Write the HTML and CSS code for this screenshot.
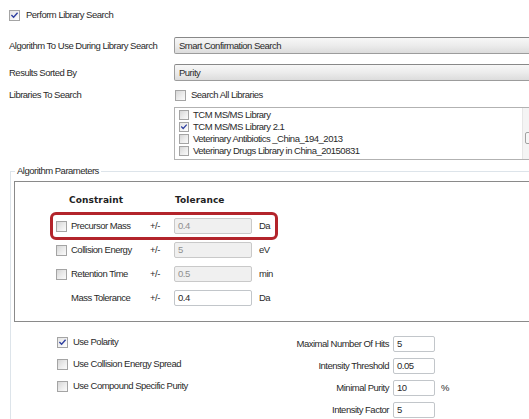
FILE: index.html
```html
<!DOCTYPE html>
<html>
<head>
<meta charset="utf-8">
<title>Library Search Settings</title>
<link rel="stylesheet" href="styles.css">
</head>
<body>
<div class="page">
  <label class="check-line top-check"><span class="cb on"><svg viewBox="0 0 11 11"><path d="M2.3 5.4 L4.4 7.6 L8.7 2.8"/></svg></span>Perform Library Search</label>

  <div class="field field-algo">
    <span class="field-label">Algorithm To Use During Library Search</span>
    <div class="combo">Smart Confirmation Search</div>
  </div>
  <div class="field field-sort">
    <span class="field-label">Results Sorted By</span>
    <div class="combo">Purity</div>
  </div>
  <div class="field field-libs">
    <span class="field-label">Libraries To Search</span>
    <label class="check-line all-libs"><span class="cb"></span>Search All Libraries</label>
  </div>

  <div class="lib-list">
    <ul class="lib-items">
      <li><span class="cb sm"></span>TCM MS/MS Library</li>
      <li><span class="cb sm on"><svg viewBox="0 0 11 11"><path d="M2.3 5.4 L4.4 7.6 L8.7 2.8"/></svg></span>TCM MS/MS Library 2.1</li>
      <li><span class="cb sm"></span>Veterinary Antibiotics _China_194_2013</li>
      <li><span class="cb sm"></span>Veterinary Drugs Library in China_20150831</li>
    </ul>
    <div class="vscroll">
      <span class="arrow up"></span>
      <span class="thumb"></span>
      <span class="arrow down"></span>
    </div>
  </div>

  <section class="group">
    <div class="legend">Algorithm Parameters</div>

    <div class="constraints">
      <div class="c-row c-head">
        <span class="h-constraint">Constraint</span>
        <span class="h-tol">Tolerance</span>
      </div>
      <div class="c-row flagged">
        <span class="cb"></span>
        <span class="c-label">Precursor Mass</span>
        <span class="pm">+/-</span>
        <span class="tbox off">0.4</span>
        <span class="unit">Da</span>
      </div>
      <div class="c-row">
        <span class="cb"></span>
        <span class="c-label">Collision Energy</span>
        <span class="pm">+/-</span>
        <span class="tbox off">5</span>
        <span class="unit">eV</span>
      </div>
      <div class="c-row">
        <span class="cb"></span>
        <span class="c-label">Retention Time</span>
        <span class="pm">+/-</span>
        <span class="tbox off">0.5</span>
        <span class="unit">min</span>
      </div>
      <div class="c-row">
        <span></span>
        <span class="c-label">Mass Tolerance</span>
        <span class="pm">+/-</span>
        <span class="tbox">0.4</span>
        <span class="unit">Da</span>
      </div>
    </div>

    <div class="extras">
      <div class="opts">
        <label class="check-line opt"><span class="cb on"><svg viewBox="0 0 11 11"><path d="M2.3 5.4 L4.4 7.6 L8.7 2.8"/></svg></span>Use Polarity</label>
        <label class="check-line opt"><span class="cb"></span>Use Collision Energy Spread</label>
        <label class="check-line opt"><span class="cb"></span>Use Compound Specific Purity</label>
      </div>
      <div class="limits">
        <span class="l-label">Maximal Number Of Hits</span><span class="tbox">5</span><span></span>
        <span class="l-label">Intensity Threshold</span><span class="tbox">0.05</span><span></span>
        <span class="l-label">Minimal Purity</span><span class="tbox">10</span><span class="unit">%</span>
        <span class="l-label">Intensity Factor</span><span class="tbox">5</span><span></span>
      </div>
    </div>
  </section>
</div>
</body>
</html>
```

FILE: styles.css
```css
html, body {
  margin: 0;
  padding: 0;
  background: #ffffff;
}

body {
  font-family: "Liberation Sans", Arial, sans-serif;
  font-size: 9.5px;
  letter-spacing: -0.5px;
  color: #2a2a2a;
}

.page {
  width: 529px;
  height: 419px;
  overflow: hidden;
  box-sizing: border-box;
  padding: 8px 0 0 9px;
}

/* checkbox */
.cb {
  flex: none;
  display: inline-block;
  width: 11px;
  height: 11px;
  box-sizing: border-box;
  border: 1px solid #a4a4a4;
  background: linear-gradient(135deg, #d6d6d6 0%, #ececec 55%, #fbfbfb 100%);
  position: relative;
}
.cb.sm {
  width: 10px;
  height: 10px;
}
.cb.on {
  background: linear-gradient(135deg, #e4e4e4 0%, #f4f4f4 60%, #ffffff 100%);
}
.cb svg {
  display: block;
  width: 100%;
  height: 100%;
}
.cb svg path {
  fill: none;
  stroke: #2f40a0;
  stroke-width: 1.7;
  stroke-linecap: square;
}

.check-line {
  display: flex;
  align-items: center;
  gap: 6px;
  line-height: 12px;
}

.top-check {
  height: 14px;
}

/* label + control rows */
.field {
  display: grid;
  grid-template-columns: 165px 1fr;
  align-items: center;
  line-height: 12px;
}
.field-algo {
  margin-top: 15px;
  height: 17px;
}
.field-sort {
  margin-top: 10px;
  height: 17px;
}
.field-libs {
  margin-top: 8px;
  height: 12px;
}
.all-libs {
  margin-left: 1px;
  gap: 5px;
}

.combo {
  width: 370px;
  height: 17px;
  box-sizing: border-box;
  border: 1px solid #9c9c9c;
  border-top-color: #888888;
  border-radius: 2px;
  background: linear-gradient(#f7f7f7 0%, #ececec 50%, #dcdcdc 100%);
  padding-left: 4px;
  line-height: 15px;
}

/* library list box */
.lib-list {
  margin: 6px 0 0 165px;
  width: 367px;
  height: 53px;
  box-sizing: border-box;
  border: 1px solid #b2b2b2;
  display: flex;
}
.lib-items {
  list-style: none;
  margin: 0;
  padding: 1px 0 0 4px;
  flex: 1;
}
.lib-items li {
  height: 12px;
  display: flex;
  align-items: center;
  gap: 4px;
  line-height: 12px;
}

.vscroll {
  width: 17px;
  flex: none;
  background: #f4f4f4;
  border-left: 1px solid #e6e6e6;
  display: flex;
  flex-direction: column;
  align-items: center;
}
.arrow {
  width: 0;
  height: 0;
  border-left: 3px solid transparent;
  border-right: 3px solid transparent;
}
.arrow.up {
  margin-top: 7px;
  border-bottom: 3px solid #444;
}
.thumb {
  margin-top: 14px;
  width: 13px;
  height: 12px;
  box-sizing: border-box;
  border: 1px solid #a2a2a2;
  border-radius: 2px;
  background: #f6f6f6;
}
.arrow.down {
  margin-top: 6px;
  border-top: 3px solid #444;
}

/* Algorithm Parameters group */
.group {
  margin: 11px 0 0 1px;
  border-top: 1px solid #dde4ea;
  border-left: 1px solid #dde4ea;
  padding-bottom: 40px;
}
.legend {
  width: max-content;
  margin: -7px 0 0 4px;
  padding: 0 2px;
  background: #ffffff;
  line-height: 12px;
}

.constraints {
  margin: 4px 0 0 3px;
  width: 620px;
  border: 1px solid #8a8a8a;
  padding: 12px 0 11px 0;
}

.c-row {
  display: grid;
  grid-template-columns: 15px 79px 24px 78px auto;
  align-items: center;
  height: 24px;
  padding-left: 41px;
  line-height: 12px;
}
.c-head {
  height: 12px;
  margin-bottom: 8px;
}
.h-constraint,
.h-tol {
  font-family: "DejaVu Sans", Verdana, sans-serif;
  font-weight: bold;
  font-size: 9px;
  letter-spacing: 0.1px;
  color: #222222;
}
.h-constraint {
  grid-column: 1 / span 2;
  padding-left: 13px;
}
.h-tol {
  grid-column: 4;
  padding-left: 1px;
}

.tbox {
  height: 16px;
  box-sizing: border-box;
  border: 1px solid #c2c6ca;
  border-radius: 2px;
  background: #ffffff;
  padding-left: 3px;
  line-height: 14px;
}
.tbox.off {
  background: #f0f0f0;
  border-color: #c9c9c9;
  color: #8f8f8f;
}
.unit {
  margin-left: 7px;
}

/* highlight drawn around the first constraint */
.flagged {
  position: relative;
}
.flagged::after {
  content: "";
  position: absolute;
  left: 35px;
  top: -2px;
  width: 228px;
  height: 28px;
  box-sizing: border-box;
  border: 3px solid #b3242b;
  border-radius: 6px;
  pointer-events: none;
}

/* options below the constraint table */
.extras {
  display: flex;
}
.opts {
  flex: none;
  width: 248px;
  box-sizing: border-box;
  padding: 9px 0 0 46px;
}
.opt {
  height: 22px;
  gap: 5px;
}

.limits {
  padding-top: 11px;
  display: grid;
  grid-template-columns: 130px 42px auto;
  grid-auto-rows: 22px;
  column-gap: 4px;
  align-items: center;
  line-height: 12px;
}
.l-label {
  text-align: right;
}
.limits .unit {
  margin-left: 2px;
}
```
